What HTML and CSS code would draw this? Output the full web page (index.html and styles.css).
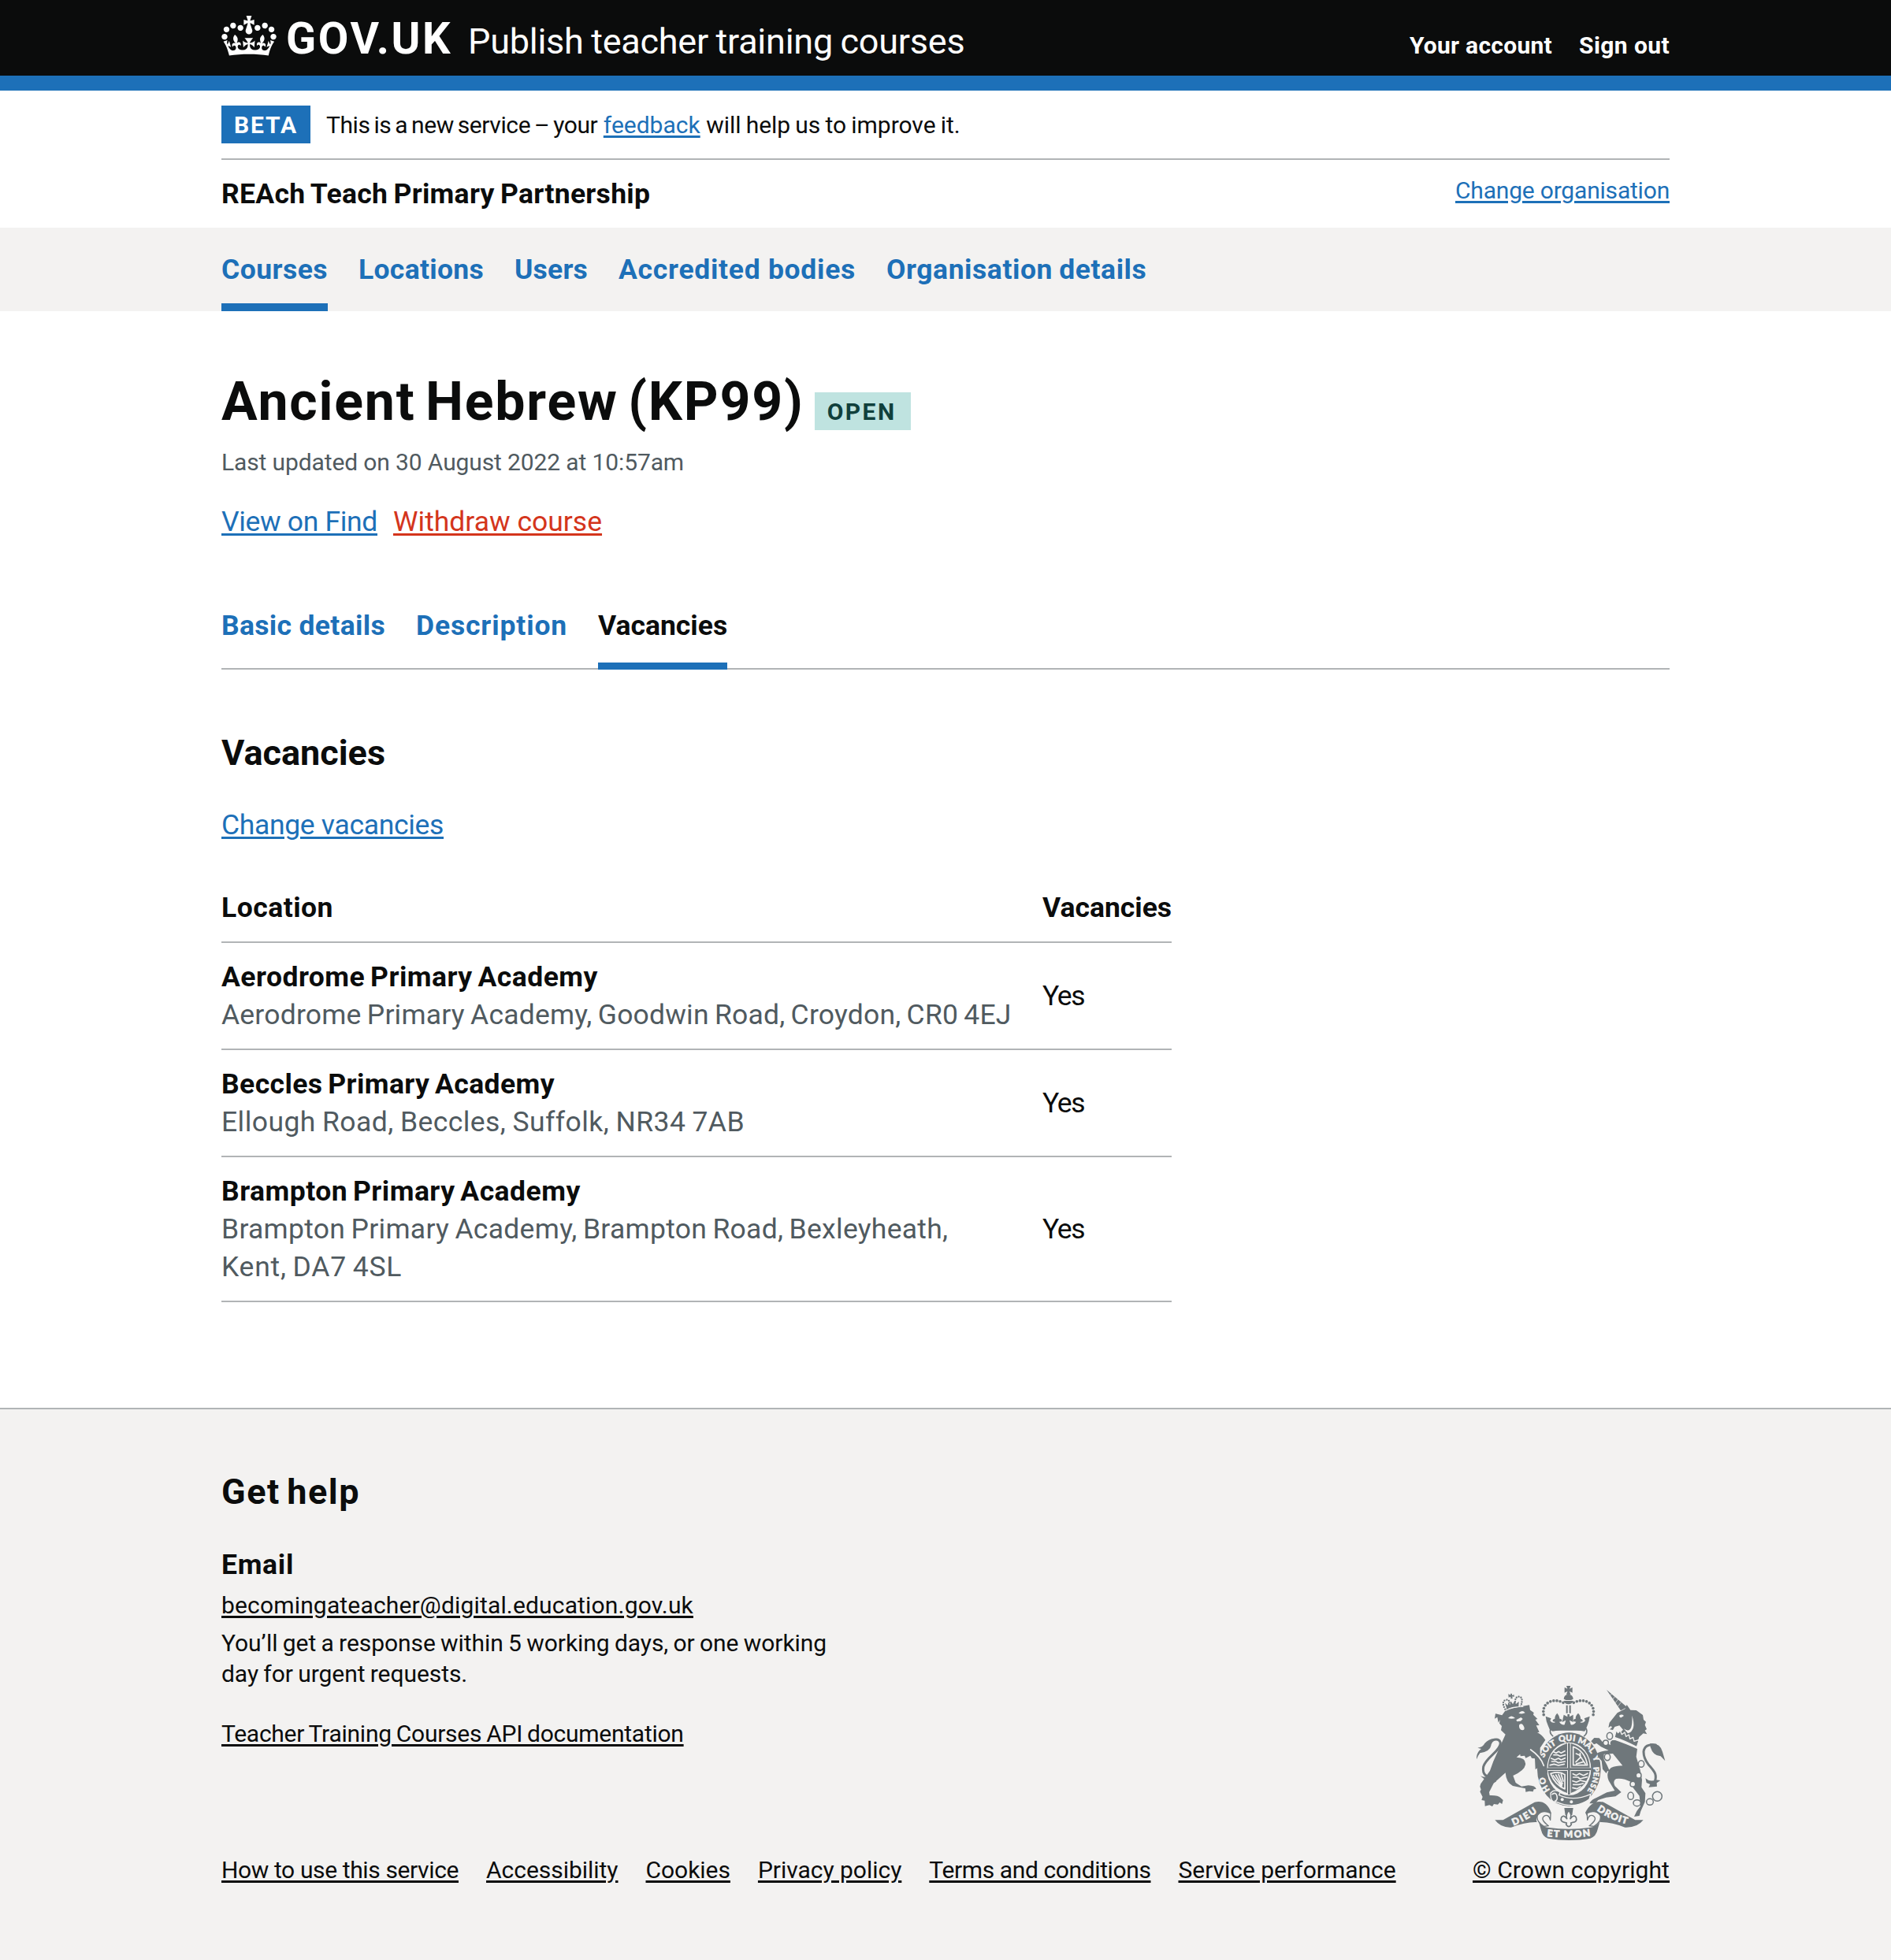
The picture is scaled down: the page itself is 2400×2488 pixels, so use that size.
FILE: index.html
```html
<!DOCTYPE html>
<html lang="en">
<head>
<meta charset="utf-8">
<title>Ancient Hebrew (KP99) - Vacancies</title>
<link rel="stylesheet" href="styles.css">
</head>
<body>
<header class="header">
  <div class="container header-row">
    <a class="logo" href="#">
      <svg class="crown" viewBox="0 0 132 97" aria-hidden="true"><path fill="currentColor" fill-rule="evenodd" d="M25 30.2c3.5 1.5 7.7-.2 9.1-3.7 1.5-3.6-.2-7.8-3.9-9.2-3.6-1.4-7.6.3-9.1 3.9-1.4 3.5.3 7.5 3.9 9zM9 39.5c3.6 1.5 7.8-.2 9.2-3.7 1.5-3.6-.2-7.8-3.9-9.1-3.6-1.5-7.6.2-9.1 3.8-1.4 3.5.3 7.5 3.8 9zM4.4 57.2c3.5 1.5 7.7-.2 9.1-3.8 1.5-3.6-.2-7.7-3.9-9.1-3.5-1.5-7.6.3-9.1 3.8-1.4 3.5.3 7.6 3.9 9.1zm38.3-21.4c3.5 1.5 7.7-.2 9.1-3.8 1.5-3.6-.2-7.7-3.9-9.1-3.6-1.5-7.6.3-9.1 3.8-1.3 3.6.4 7.7 3.9 9.1zm64.4-5.6c-3.6 1.5-7.8-.2-9.1-3.7-1.5-3.6.2-7.8 3.8-9.2 3.6-1.4 7.7.3 9.2 3.9 1.3 3.5-.4 7.5-3.9 9zm15.9 9.3c-3.6 1.5-7.7-.2-9.1-3.7-1.5-3.6.2-7.8 3.7-9.1 3.6-1.5 7.7.2 9.2 3.8 1.5 3.5-.3 7.5-3.8 9zm4.7 17.7c-3.6 1.5-7.8-.2-9.2-3.8-1.5-3.6.2-7.7 3.9-9.1 3.6-1.5 7.7.3 9.2 3.8 1.3 3.5-.4 7.6-3.9 9.1zM89.3 35.8c-3.6 1.5-7.8-.2-9.2-3.8-1.4-3.6.2-7.7 3.9-9.1 3.6-1.5 7.7.3 9.2 3.8 1.4 3.6-.3 7.7-3.9 9.1zM69.7 17.7l8.9 4.7V9.3l-8.9 2.8c-.2-.3-.5-.6-.9-.9L72.4 0H59.6l3.5 11.2c-.3.3-.6.5-.9.9l-8.8-2.8v13.1l8.8-4.7c.3.3.6.7.9.9l-5 15.4v.1c-.2.8-.4 1.6-.4 2.4 0 4.1 3.1 7.5 7 8.1h.2c.3 0 .7.1 1 .1.4 0 .7 0 1-.1h.2c4-.6 7.1-4.1 7.1-8.1 0-.8-.1-1.7-.4-2.4V34l-5.1-15.4c.4-.2.7-.6 1-.9zM66 92.8c16.9 0 32.8 1.1 47.1 3.2 4-16.9 8.9-26.7 14-33.5l-9.6-3.4c1 4.9 1.1 7.2 0 10.2-1.5-1.4-3-4.3-4.2-8.7L108.6 76c2.8-2 5-3.2 7.5-3.3-4.4 9.4-10 11.9-13.6 11.2-4.3-.8-6.3-4.6-5.6-7.9 1-4.7 5.7-5.9 8-.5 4.3-8.7-3-11.4-7.6-8.8 7.1-7.2 7.9-13.5 2.1-21.1-8 6.1-8.1 12.3-4.5 20.8-4.7-5.4-12.1-2.5-9.5 6.2 3.4-5.2 7.9-2 7.2 3.1-.6 4.3-6.4 7.8-13.5 7.2-10.3-.9-10.9-8-11.2-13.8 2.5-.5 7.1 1.8 11 7.3L80.2 60c-4.1 4.4-8 5.3-12.3 5.4 1.4-4.4 8-11.6 8-11.6H55.5s6.4 7.2 7.9 11.6c-4.2-.1-8-1-12.3-5.4l1.4 16.4c3.9-5.5 8.5-7.7 10.9-7.3-.3 5.8-.9 12.8-11.1 13.8-7.2.6-12.9-2.9-13.5-7.2-.7-5 3.8-8.3 7.1-3.1 2.7-8.7-4.6-11.6-9.4-6.2 3.7-8.5 3.6-14.7-4.6-20.8-5.8 7.6-5 13.9 2.2 21.1-4.7-2.6-11.9.1-7.7 8.8 2.3-5.5 7.1-4.2 8.1.5.7 3.3-1.3 7.1-5.7 7.9-3.5.7-9-1.8-13.5-11.2 2.5.1 4.7 1.3 7.5 3.3l-4.7-15.4c-1.2 4.4-2.7 7.2-4.3 8.7-1.1-3-.9-5.3 0-10.2l-9.5 3.4c5 6.9 9.9 16.7 14 33.5 14.8-2.1 30.8-3.2 47.7-3.2z"/></svg>
      <span class="logo-text">GOV.UK</span>
    </a>
    <a class="service-name" href="#">Publish teacher training courses</a>
    <nav class="account-nav">
      <a class="account" href="#">Your account</a>
      <a class="sign-out" href="#">Sign out</a>
    </nav>
  </div>
</header>

<div class="container">
  <div class="phase-banner">
    <strong class="tag tag-beta">BETA</strong>
    <p class="phase-text"><span class="phase-start">This is a new service – your</span> <a class="link feedback" href="#">feedback</a> <span class="phase-end">will help us to improve it.</span></p>
  </div>
  <div class="organisation">
    <span class="organisation-name">REAch Teach Primary Partnership</span>
    <a class="link organisation-change" href="#">Change organisation</a>
  </div>
</div>

<nav class="primary-nav">
  <div class="container primary-nav-list">
    <a class="primary-nav-item current sp-courses" href="#">Courses</a>
    <a class="primary-nav-item sp-locations" href="#">Locations</a>
    <a class="primary-nav-item sp-users" href="#">Users</a>
    <a class="primary-nav-item sp-bodies" href="#">Accredited bodies</a>
    <a class="primary-nav-item sp-details" href="#">Organisation details</a>
  </div>
</nav>

<main class="container main">
  <div class="title-row">
    <h1 class="title">Ancient Hebrew (KP99)</h1>
    <strong class="tag tag-open">OPEN</strong>
  </div>
  <p class="updated">Last updated on 30 August 2022 at 10:57am</p>
  <div class="actions">
    <a class="link view-find" href="#">View on Find</a>
    <a class="link withdraw" href="#">Withdraw course</a>
  </div>
  <nav class="tabs">
    <a class="tab sp-basic" href="#">Basic details</a>
    <a class="tab sp-description" href="#">Description</a>
    <a class="tab tab-current" href="#">Vacancies</a>
  </nav>
  <h2 class="section-title">Vacancies</h2>
  <p class="change-vacancies"><a class="link" href="#">Change vacancies</a></p>
  <table class="table">
    <thead>
      <tr><th class="sp-location">Location</th><th class="status">Vacancies</th></tr>
    </thead>
    <tbody>
      <tr>
        <td><strong class="school">Aerodrome Primary Academy</strong><span class="address">Aerodrome Primary Academy, Goodwin Road, Croydon, CR0 4EJ</span></td>
        <td class="status yes">Yes</td>
      </tr>
      <tr>
        <td><strong class="school sp-beccles">Beccles Primary Academy</strong><span class="address sp-ellough">Ellough Road, Beccles, Suffolk, NR34 7AB</span></td>
        <td class="status yes">Yes</td>
      </tr>
      <tr>
        <td><strong class="school">Brampton Primary Academy</strong><span class="address sp-brampton">Brampton Primary Academy, Brampton Road, Bexleyheath,<br><span class="sp-kent">Kent, DA7 4SL</span></span></td>
        <td class="status yes">Yes</td>
      </tr>
    </tbody>
  </table>
</main>

<footer class="footer">
  <div class="container footer-row">
    <div class="footer-main">
      <h2 class="help-title">Get help</h2>
      <h3 class="email-title">Email</h3>
      <p class="email"><a class="footer-link" href="#">becomingateacher@digital.education.gov.uk</a></p>
      <p class="response">You’ll get a response within 5 working days, or one working day for urgent requests.</p>
      <p class="api"><a class="footer-link" href="#">Teacher Training Courses API documentation</a></p>
      <nav class="footer-nav">
        <a class="footer-link sp-how" href="#">How to use this service</a>
        <a class="footer-link" href="#">Accessibility</a>
        <a class="footer-link" href="#">Cookies</a>
        <a class="footer-link" href="#">Privacy policy</a>
        <a class="footer-link sp-terms" href="#">Terms and conditions</a>
        <a class="footer-link" href="#">Service performance</a>
      </nav>
    </div>
    <div class="copyright">
      <svg class="arms" viewBox="102 87 720 588" aria-hidden="true">
        <defs>
          <path id="scroll-left" d="M243 619Q292 600 342 562"/>
          <path id="scroll-right" d="M560 561Q612 599 682 616"/>
          <path id="scroll-mid" d="M370 660Q454 670 540 658"/>
        </defs>
        <g fill="#6f777b" stroke-linejoin="round" stroke-linecap="round">
          <!-- centre crown -->
          <path d="M444 87h16l-4 11 11-5v20l-11-5 4 12h-16l4-12-11 5V93l11 5z"/>
          <path d="M434 137q1-17 18-17t18 17l-8 4h-20zM434 144h36q-4 13-18 13t-18-13z"/>
          <g fill="none" stroke="#6f777b" stroke-width="11" stroke-dasharray="0 12.5">
            <path d="M432 151C385 128 342 160 361 208"/><path d="M472 151C519 128 562 160 543 208"/>
          </g>
          <path d="M443 161h6v30h-6zM455 161h6v30h-6zM434 197l14 8v-10h8v10l14-8v28l-14-7 5 17q12 2 20-11l-10-2q-1-10 8-9-1-12 10-22 10 10 9 22 9 1 8 9l-10 3q10 7 20-5l-4-9 21-8q-3 22-9 35l-8 19H382l-8-19q-7-14-9-35l21 8-4 9q10 12 20 5l-10-3q-1-8 8-9-1-12 9-22 9 10 10 22 9-1 8 9l-10 2q8 13 20 11l5-17-14 7z"/>
          <path d="M383 248Q452 233 521 248L513 260Q452 247 391 260z"/>
          <path fill="none" stroke="#6f777b" stroke-width="5" d="M384 251q-6 16 8 27M520 251q6 16-8 27"/>
          <!-- garter and shield -->
          <ellipse cx="454" cy="405" rx="121" ry="140"/>
          <ellipse cx="454" cy="403" rx="84" ry="101" fill="#f3f2f1"/>
          <path d="M374 398q2-69 73-92v92zM461 306q70 20 72 92h-72zM374 411h73v84q-65-22-73-84zM461 411h72q-9 62-72 84z"/>
          <g fill="none" stroke="#f3f2f1" stroke-width="5">
            <path d="M395 338l10 5 10-6 9 6 14-8M396 350h15l9 5 20-5M386 363l14 6 14-6 10 6 15-7M388 375h16l10 5 25-5M382 389l15-4 17 5 22-5"/>
            <path d="M470 319q44 15 54 70h-54zM481 345l12 5 10 14 13 20M480 377l18-18-2-15M482 384l25-7"/>
            <path d="M384 421q34-10 54 4v55q-37-16-54-59M394 428l32 42M404 426l23 40M414 424l15 36M424 424l8 26"/>
            <path d="M469 422l13 6 11-7 16 7 16-7M470 435h18l8 6 27-7M468 449l14 5 15-7 20 5M470 463h20l18-4M468 475l16 4 14-8"/>
          </g>
          <path d="M450 305h8v196h-8zM370 400h168v8H370z"/>
          <g fill="#f3f2f1" stroke="#f3f2f1" stroke-width="1.5" font-family="Lato, sans-serif" font-weight="900" font-size="32">
            <text transform="translate(357 362) rotate(-57)">S</text>
            <text transform="translate(364 344) rotate(-45)">O</text>
            <text transform="translate(382 326) rotate(-38)">I</text>
            <text transform="translate(389 320) rotate(-30)">T</text>
            <text transform="translate(416 301) rotate(-9)">Q</text>
            <text transform="translate(442 297)">U</text>
            <text transform="translate(467 297) rotate(8)">I</text>
            <text transform="translate(486 303) rotate(20)">M</text>
            <text transform="translate(513 316) rotate(37)">A</text>
            <text transform="translate(528 333) rotate(50)">L</text>
            <text transform="translate(543 358) rotate(65)">Y</text>
            <text transform="translate(547 397) rotate(86)" font-size="29">P</text>
            <text transform="translate(548 415) rotate(93)" font-size="29">E</text>
            <text transform="translate(546 433) rotate(102)" font-size="29">N</text>
            <text transform="translate(540 457) rotate(112)" font-size="29">S</text>
            <text transform="translate(532 473) rotate(120)" font-size="29">E</text>
            <text transform="translate(382 484) rotate(-122)" font-size="32">H</text>
            <text transform="translate(368 458) rotate(-108)" font-size="32">O</text>
          </g>
          <!-- buckle strap -->
          <path stroke="#f3f2f1" stroke-width="4" d="M384 495q14-17 36-3l-4 11q56 26 121-4l-6 20q-56 40-125 10-24 4-22-34z"/>
          <circle cx="428" cy="520" r="6" fill="#f3f2f1"/><circle cx="463" cy="529" r="6" fill="#f3f2f1"/>
          <path fill="none" stroke="#f3f2f1" stroke-width="5" d="M390 500q14-10 18 6t-7 20"/>
          <!-- lion -->
          <path d="M199 199l12-17 12-7 80-15 3 19 14 10-2 8 16 16-8 3 15 21-12 1 12 25-8 2q18 8 31 28l-20 30 0 24 20 27 9 47-13-12-3 16-11-12-8 2-1-17-11 7-2-41-12-2-5-9-18 9-4-9-16 2-1-8-14 12q38 2 34 29-4 22-47 41l10 27 22 14 26-4q27 1 30 14l-9 1-3 9-14-2-14 3-1-13-48-10q-25-12-28-50l-45 40-17 34 2 12q33-1 41 9l10 9-4 15-9-6-7 8-15-2-6 9-11-5-17 4-1-21-12-2 4-12-10-20 4-8-4-12 3-10 35-50 13-36 46-102-17-16 3-16-9-10 2-14-6 11-4-21-10 6 3-19z"/>
          <path d="M211 176q-16-28 2-36 16-2 16 18M270 166q12-36-6-38-16 0-15 22" fill="none" stroke="#6f777b" stroke-width="7" stroke-dasharray="0 9"/>
          <path d="M216 170l-6-18 11 9 2-12 7 10 3-14 7 12 7-13 5 12 11-9-1 20q-25-3-46 10zM223 118l8 4 1-6 5 1v6l8-2v8l-7-2 1 9h-7v-8l-8 3z"/>
          <path fill="none" stroke="#f3f2f1" stroke-width="3" d="M213 181q30-15 66-15"/>
          <g fill="#f3f2f1">
            <path d="M222 210q12-15 27 0-14 5-27 0zM262 191q14-16 25-1-12 6-25 1zM253 217l18-10 7 6-8 8-14 2zM264 236q8-8 15 0 12 18-2 20-15-2-13-20z"/>
          </g>
          <path fill="none" stroke="#f3f2f1" stroke-width="5" d="M308 330q40 28 50 61"/>
          <path fill="none" stroke="#6f777b" stroke-width="9" d="M180 438Q120 440 128 395C136 360 194 335 193 304Q188 284 160 295"/>
          <path d="M102 367q-2-26 18-40l-14-4q20-2 27-17 20-22 45-16-19 9-21 25-4 22-42 28-9 12-13 24zM117 430q20 10 64-2l-5 24q-16 8-27 3-14-8-32-25z"/>
          <!-- unicorn -->
          <path d="M597 102l78 66-24 13z"/>
          <path fill="none" stroke="#f3f2f1" stroke-width="2" d="M611 124l6-7M621 138l7-10M631 151l9-12M641 164l10-13"/>
          <path d="M608 227l30-37 29-15 7-16 14 20 22 1 25 18 3 18 9 8-4 12 7 16-7 5 8 14-14-3-16 14-7 22-74-30 20-20-14-16-18 5-7 12-12-2 9-8-4-5-10 6z"/>
          <path fill="#f3f2f1" d="M645 200q10-7 18 1l-10 7q-6 1-8-8zM662 250q36 25 32-50 18 56-16 68z"/>
          <path stroke="#f3f2f1" stroke-width="4" d="M634 256l7 10 8-9 6 15 11-8 5 16 11-7 4 16 12-6 4 15 19-6-9 28q-45-24-85-37z"/>
          <path d="M630 294q38 13 84 33l-4 30 15 50 7 38-2 28 15 23-2 33-16 36-5 17-20 3 10-21 14-19-4-39-30-39-2-14q-30-16-57-12-14 8-4 28l24 23-22 16-36 4-30 10-11 13h-22q8-16 28-23l38-19 30-7-23-38q-12-30 9-49 17-8 44-8l-37-46-34 2 0 20 12 22 10 23-9 0-4 8-14-16-4-31q-19-22-16-30 20-9 43-10l-29-14-17-13-10 4-11-12 12-13 19 1 12 14 32 12q-6-12 6-18z"/>
          <path fill="none" stroke="#6f777b" stroke-width="9" d="M784 312Q742 306 738 338Q738 362 756 386C782 414 792 428 778 458"/>
          <path d="M762 307q39-4 48 31l10 35-17-18q-29-2-39-35zM745 439q18 16 39 6l18 2-14 10 1 13-32 3 6-11-14-6z"/>
          <g fill="#f3f2f1" stroke="#6f777b" stroke-width="4.5">
            <ellipse cx="609" cy="278" rx="11" ry="13"/><circle cx="594" cy="304" r="10"/><ellipse cx="600" cy="358" rx="11" ry="13"/>
            <ellipse cx="729" cy="384" rx="11" ry="13"/><circle cx="719" cy="428" r="10"/><circle cx="697" cy="461" r="10"/>
            <ellipse cx="689" cy="506" rx="11" ry="14"/><ellipse cx="713" cy="533" rx="14" ry="12"/><ellipse cx="762" cy="529" rx="13" ry="12"/><circle cx="790" cy="508" r="18"/>
          </g>
          <!-- scroll -->
          <path d="M172 598h31l120-68q45-11 63 40l-4 12-40-2q-18 10-10 26-42-2-98 20-40 2-62-28zM737 598h-31L586 530q-45-11-70 40l6 12 40-2q17 10 9 26 42-2 96 20 47 2 70-28z"/>
          <path fill="#f3f2f1" stroke="#6f777b" stroke-width="4" d="M384 572q-32-15-50 8-7 22 24 42l18-2q-32-24-18-36 18-12 25 14zM523 572q32-15 50 8 7 22-24 42l-18-2q32-24 18-36-18-12-25 14z"/>
          <path d="M338 602q12 22 34 24 82 12 164 0 23-3 36-24l-9 32q-6 27-28 34-81 14-161 0-20-5-27-34z"/>
          <path d="M436 552h34l-4 27h-26z"/>
          <path fill="#f3f2f1" stroke="#6f777b" stroke-width="5" d="M453 562q13 14 6 31 13-18 22-5 6 17-13 19l-7 2 2 6q-10 16-20 0l2-6-8-2q-18-3-12-19 9-12 21 5-6-18 7-31z"/>
          <g fill="#f3f2f1" stroke="#f3f2f1" stroke-width="2" font-family="Lato, sans-serif" font-weight="900" font-size="36">
            <text textLength="104"><textPath href="#scroll-left" textLength="104">DIEU</textPath></text>
            <text textLength="126"><textPath href="#scroll-right" textLength="126">DROIT</textPath></text>
            <text textLength="166"><textPath href="#scroll-mid" textLength="166">ET MON</textPath></text>
          </g>
        </g>
      </svg>
      <a class="footer-link sp-crown" href="#">© Crown copyright</a>
    </div>
  </div>
</footer>
</body>
</html>
```
FILE: styles.css
```css
* { box-sizing: border-box; }

body {
  margin: 0;
  background: #fff;
  color: #0b0c0c;
  font-family: Roboto, "Noto Sans", sans-serif;
  font-size: 35.5px;
  line-height: 48px;
}

h1, h2, h3, p { margin: 0; }
a { color: inherit; text-decoration: none; white-space: nowrap; }

.container { width: 1838px; margin: 0 auto; }

.link, .footer-link {
  color: #1d70b8;
  text-decoration: underline;
  text-decoration-thickness: 2.5px;
  text-underline-offset: 3px;
}

/* Header */
.header {
  height: 115px;
  background: #0b0c0c;
  border-bottom: 19px solid #1d70b8;
  color: #fff;
}
.header-row { display: flex; align-items: baseline; padding-top: 1px; line-height: 96px; }
.logo { display: flex; align-items: baseline; width: 313px; }
.crown { position: relative; top: 3px; width: 70px; height: 51px; margin: 0 12px -3px 0; }
.logo-text { font-size: 56px; font-weight: 700; letter-spacing: .047em; }
.service-name { font-size: 45px; letter-spacing: -.0055em; word-spacing: -.03em; }
.account-nav { display: flex; gap: 34px; margin-left: auto; font-size: 30px; font-weight: 700; }
.account { letter-spacing: .009em; }
.sign-out { letter-spacing: .0137em; }

/* Phase banner */
.phase-banner {
  display: flex;
  align-items: center;
  height: 88px;
  border-bottom: 2px solid #b1b4b6;
  font-size: 30px;
}
.tag {
  height: 48px;
  padding-left: 16px;
  font-size: 30px;
  font-weight: 700;
  line-height: 50px;
}
.tag-beta { width: 113px; margin-right: 20px; background: #1d70b8; color: #fff; letter-spacing: .062em; }
.phase-text { padding-top: 1px; white-space: nowrap; }
.phase-start { letter-spacing: -.014em; word-spacing: -.07em; }
.phase-end { letter-spacing: -.001em; word-spacing: -.04em; }

/* Organisation */
.organisation { display: flex; justify-content: space-between; height: 86px; padding-top: 15px; }
.organisation-name { margin-top: 4px; font-weight: 700; letter-spacing: .008em; word-spacing: -.05em; }
.organisation-change { font-size: 30px; letter-spacing: -.0066em; }

/* Primary navigation */
.primary-nav { background: #f3f2f1; }
.primary-nav-list { display: flex; gap: 39px; height: 106px; }
.primary-nav-item { padding-top: 29px; color: #1d70b8; font-weight: 700; }
.primary-nav-item.current { border-bottom: 10px solid #1d70b8; }
.sp-courses { letter-spacing: .0129em; }
.sp-locations { letter-spacing: .0084em; }
.sp-users { letter-spacing: .0054em; }
.sp-bodies { letter-spacing: .0201em; }
.sp-details { letter-spacing: .0156em; word-spacing: -.03em; }

/* Course heading */
.main { padding-top: 76px; }
.title-row { display: flex; align-items: baseline; gap: 13px; height: 80px; }
.title { font-size: 68px; line-height: 79px; letter-spacing: .0262em; word-spacing: -.09em; white-space: nowrap; }
.tag-open { width: 122px; background: #bfe3e0; color: #10403c; letter-spacing: .0828em; }
.updated { margin-top: 17px; color: #505a5f; font-size: 30px; line-height: 38px; letter-spacing: -.0041em; }
.actions { display: flex; gap: 20px; margin-top: 32px; }
.view-find { letter-spacing: -.0096em; }
.withdraw { color: #d4351c; }

/* Tabs */
.tabs { display: flex; gap: 39px; height: 80px; margin-top: 84px; border-bottom: 2px solid #b1b4b6; }
.tab { height: 80px; color: #1d70b8; font-weight: 700; }
.tab-current { border-bottom: 9px solid #1d70b8; color: #0b0c0c; }
.sp-basic { letter-spacing: .0091em; }
.sp-description { letter-spacing: .0239em; }

.section-title { margin-top: 77px; font-size: 45px; line-height: 58px; }
.change-vacancies { margin-top: 38px; letter-spacing: -.0092em; }

/* Locations table */
.table { width: 1206px; margin-top: 38px; border-collapse: separate; border-spacing: 0; table-layout: fixed; }
.table th, .table td { padding: 19px 0; border-bottom: 2px solid #b1b4b6; text-align: left; white-space: nowrap; }
.table .status { width: 164px; }
.table .yes { letter-spacing: -.04em; }
.sp-location { letter-spacing: .0138em; }
.school, .address { display: block; }
.school { letter-spacing: .0135em; word-spacing: -.07em; }
.sp-beccles { letter-spacing: .0115em; }
.address { color: #505a5f; letter-spacing: .0055em; word-spacing: -.05em; }
.sp-ellough { letter-spacing: .0125em; word-spacing: -.03em; }
.sp-brampton { letter-spacing: .0079em; }
.sp-kent { letter-spacing: .022em; }

/* Footer */
.footer { height: 701px; margin-top: 134px; border-top: 2px solid #b1b4b6; background: #f3f2f1; font-size: 30px; line-height: 38.4px; }
.footer-row { display: flex; justify-content: space-between; align-items: flex-end; padding-top: 76px; }
.footer-link { color: #0b0c0c; }
.help-title { font-size: 45px; line-height: 58px; letter-spacing: .033em; word-spacing: -.09em; }
.email-title { margin-top: 39px; font-size: 35.5px; line-height: 48px; letter-spacing: .0197em; }
.email { margin-top: 9px; letter-spacing: .0054em; }
.response { width: 790px; margin-top: 10px; letter-spacing: -.002em; word-spacing: -.035em; }
.api { margin-top: 38px; letter-spacing: -.0086em; word-spacing: -.04em; }
.footer-nav { display: flex; gap: 35px; margin-top: 134px; letter-spacing: -.001em; }
.sp-how { letter-spacing: -.0127em; }
.sp-terms { letter-spacing: -.0128em; }
.copyright { display: flex; flex-direction: column; align-items: center; width: 250px; }
.arms { width: 240px; height: 196px; margin-bottom: 19px; }
.sp-crown { letter-spacing: .0031em; }
```
